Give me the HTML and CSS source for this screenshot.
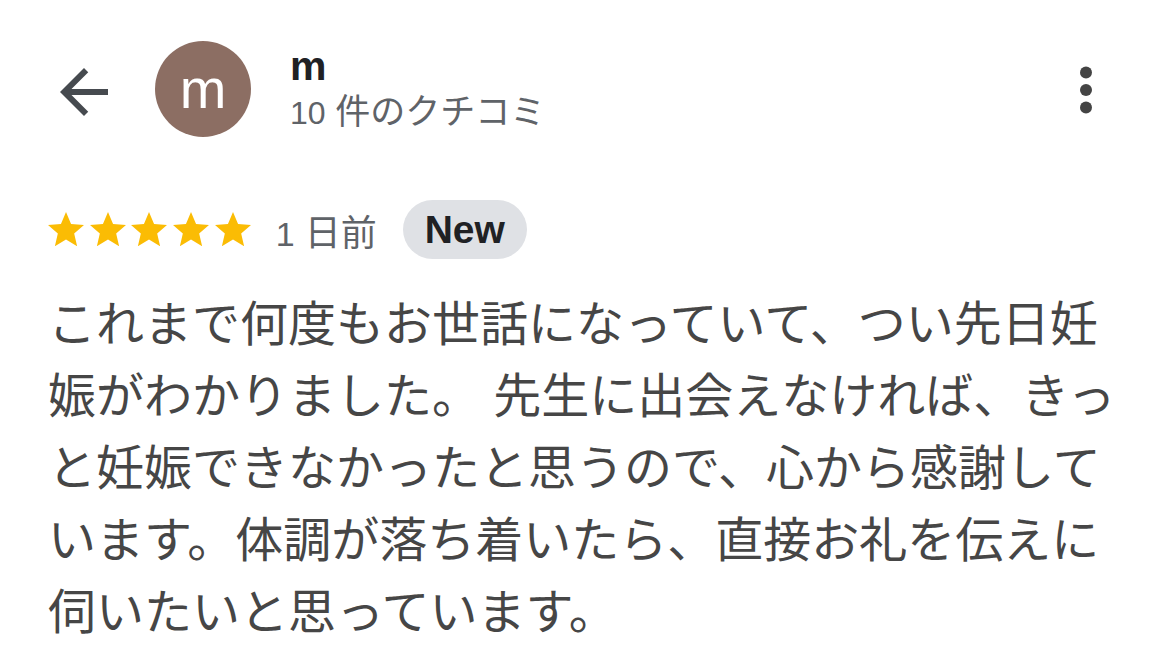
FILE: index.html
```html
<!DOCTYPE html>
<html lang="ja">
<head>
<meta charset="utf-8">
<title>m のクチコミ</title>
<link rel="stylesheet" href="styles.css">
</head>
<body>
<div class="page">
  <header class="header">
    <svg class="back" viewBox="0 0 24 24" width="72" height="72" aria-label="戻る">
      <path d="M20 11H7.83l5.59-5.59L12 4l-8 8 8 8 1.41-1.41L7.83 13H20v-2z"/>
    </svg>
    <div class="avatar">m</div>
    <div class="who">
      <div class="name">m</div>
      <div class="count"><span class="num">10</span> 件のクチコミ</div>
    </div>
    <svg class="more" viewBox="0 0 24 48" width="24" height="48" aria-label="その他">
      <circle cx="12" cy="6.5" r="6"/>
      <circle cx="12" cy="24" r="6"/>
      <circle cx="12" cy="41.5" r="6"/>
    </svg>
  </header>

  <div class="meta">
    <div class="stars">
      <svg class="star" viewBox="2 2 20 19"><path d="M12 17.27L18.18 21l-1.64-7.03L22 9.24l-7.19-.61L12 2 9.19 8.630 2 9.24l5.46 4.73L5.82 21z"/></svg>
      <svg class="star" viewBox="2 2 20 19"><path d="M12 17.27L18.18 21l-1.64-7.03L22 9.24l-7.19-.61L12 2 9.19 8.63 2 9.24l5.46 4.73L5.82 21z"/></svg>
      <svg class="star" viewBox="2 2 20 19"><path d="M12 17.27L18.18 21l-1.64-7.03L22 9.24l-7.19-.61L12 2 9.19 8.63 2 9.24l5.46 4.73L5.82 21z"/></svg>
      <svg class="star" viewBox="2 2 20 19"><path d="M12 17.27L18.18 21l-1.64-7.03L22 9.24l-7.19-.61L12 2 9.19 8.63 2 9.24l5.46 4.73L5.82 21z"/></svg>
      <svg class="star" viewBox="2 2 20 19"><path d="M12 17.27L18.18 21l-1.64-7.03L22 9.24l-7.19-.61L12 2 9.19 8.63 2 9.24l5.46 4.73L5.82 21z"/></svg>
    </div>
    <span class="date"><span class="num">1</span> 日前</span>
    <span class="chip">New</span>
  </div>

  <p class="review">これまで何度もお世話になっていて、つい先日妊娠がわかりました。 先生に出会えなければ、きっと妊娠できなかったと思うので、心から感謝しています。体調が落ち着いたら、直接お礼を伝えに伺いたいと思っています。</p>
</div>
</body>
</html>
```

FILE: styles.css
```css
html, body {
  margin: 0;
  padding: 0;
  background: #ffffff;
}

body {
  font-family: "Liberation Sans", "Noto Sans CJK JP", sans-serif;
  width: 1170px;
  height: 659px;
  overflow: hidden;
}

.page {
  padding: 41px 72px 0 48px;
}

.header {
  display: flex;
  align-items: center;
  height: 96px;
}

.back {
  fill: #464a4f;
  margin-top: 6px;
  flex: none;
}

.avatar {
  flex: none;
  width: 96px;
  height: 96px;
  margin-left: 35px;
  border-radius: 50%;
  background: #8c6e63;
  color: #ffffff;
  font-size: 56px;
  line-height: 96px;
  text-align: center;
  padding-bottom: 4px;
  box-sizing: border-box;
}

.who {
  align-self: flex-start;
  margin-top: 4px;
  margin-left: 39px;
}

.name {
  font-size: 41px;
  font-weight: 700;
  line-height: 42px;
  color: #202124;
}

.count {
  margin-top: 6px;
  font-size: 35px;
  line-height: 37px;
  color: #5f6368;
}

.count .num {
  font-size: 32px;
}

.more {
  margin-left: auto;
  fill: #444444;
  margin-top: 2px;
}

.meta {
  display: flex;
  align-items: center;
  margin-top: 63px;
  height: 59px;
}

.stars {
  display: flex;
  gap: 5.7px;
}

.star {
  width: 36px;
  height: 34.2px;
  fill: #fbbc04;
}

.date {
  margin-left: 25px;
  font-size: 36px;
  color: #5f6368;
}

.date .num {
  font-size: 34px;
}

.chip {
  margin-left: 26px;
  height: 59px;
  padding: 0 22px;
  border-radius: 30px;
  background: #dfe1e5;
  color: #202124;
  font-size: 39px;
  font-weight: 700;
  line-height: 59px;
}

.review {
  margin: 30px 0 0;
  width: 1090px;
  font-size: 48px;
  line-height: 72px;
  color: #464646;
}
```
